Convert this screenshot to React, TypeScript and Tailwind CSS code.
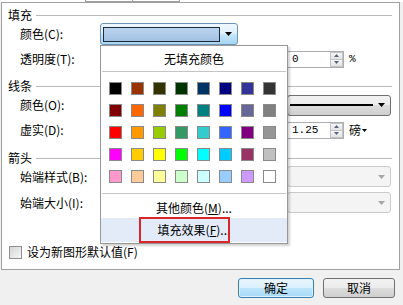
import React from "react";

const COLORS = [
  ["#000000", "#993300", "#333300", "#003300", "#003366", "#000080", "#333399", "#333333"],
  ["#800000", "#FF6600", "#808000", "#008000", "#008080", "#0000FF", "#666699", "#808080"],
  ["#FF0000", "#FF9900", "#99CC00", "#339966", "#33CCCC", "#3366FF", "#800080", "#969696"],
  ["#FF00FF", "#FFCC00", "#FFFF00", "#00FF00", "#00FFFF", "#00CCFF", "#993366", "#C0C0C0"],
  ["#FF99CC", "#FFCC99", "#FFFF99", "#CCFFCC", "#CCFFFF", "#99CCFF", "#CC99FF", "#FFFFFF"],
];

function Arrow({ color = "#000" }: { color?: string }) {
  return (
    <svg width="7" height="4" viewBox="0 0 7 4" className="block shrink-0">
      <path d="M0 0H7L3.5 4Z" fill={color} />
    </svg>
  );
}

function Header({ text }: { text: string }) {
  return (
    <div className="flex items-center h-[16px] pl-[6px] pr-[7px]">
      <span className="text-[12px] leading-none text-black">{text}</span>
      <div className="flex-1 ml-[4px] h-px bg-[#b9b9b9]" />
    </div>
  );
}

function Label({ text }: { text: string }) {
  return <span className="w-[80px] shrink-0 text-[12px] leading-none text-black">{text}</span>;
}

function Spin() {
  return (
    <div className="flex flex-col w-[13px] h-full border border-[#c3c3c3] shrink-0">
      <div className="flex-1 flex items-center justify-center bg-[linear-gradient(#f7f7f7,#e2e2e2)] border-b border-[#c3c3c3]">
        <svg width="5" height="3" viewBox="0 0 5 3" className="block">
          <path d="M0 3H5L2.5 0Z" fill="#55657f" />
        </svg>
      </div>
      <div className="flex-1 flex items-center justify-center bg-[linear-gradient(#f7f7f7,#e2e2e2)]">
        <svg width="5" height="3" viewBox="0 0 5 3" className="block">
          <path d="M0 0H5L2.5 3Z" fill="#55657f" />
        </svg>
      </div>
    </div>
  );
}

function NumInput({ value }: { value: string }) {
  return (
    <div className="flex items-stretch w-[57px] h-[17px] border border-[#abadb3] bg-white shrink-0">
      <span className="flex-1 pl-[4px] flex items-center text-[11px] leading-none font-['Liberation_Mono',monospace] text-black">
        {value}
      </span>
      <Spin />
    </div>
  );
}

function Dropdown({ disabled, children }: { disabled?: boolean; children?: React.ReactNode }) {
  return (
    <div
      className={
        disabled
          ? "flex items-center w-[104px] h-[21px] rounded-[3px] border border-[#c9cbcd] bg-[#f4f4f4] pr-[5px] shrink-0"
          : "flex items-center w-[104px] h-[21px] rounded-[3px] border border-[#707070] bg-[linear-gradient(#f2f2f2_0%,#ebebeb_50%,#dddddd_50%,#cfcfcf_100%)] pr-[5px] shrink-0"
      }
    >
      <div className="flex-1 flex items-center pl-[2px] pr-[5px]">{children}</div>
      <Arrow color={disabled ? "#a6a6a6" : "#000"} />
    </div>
  );
}

export default function App() {
  return (
    <div className="relative w-[403px] h-[305px] bg-[#f0f0f0] overflow-hidden font-['Noto_Sans_CJK_SC',sans-serif] text-black">
      {/* top strip */}
      <div className="h-[2px] bg-white flex">
        <div className="ml-[85px] w-[48px] h-[2px] border-x border-b border-[#a0a0a0]" />
        <div className="w-[47px] h-[2px] border-r border-b border-[#a0a0a0]" />
      </div>

      {/* panel */}
      <div className="ml-[1px] w-[399px] h-[268px] border border-[#a0a0a0] bg-white flex flex-col">
        <div className="mt-[4px]">
          <Header text="填充" />
        </div>
        <div className="flex items-center h-[22px] pl-[18px]">
          <Label text="颜色(C):" />
          <div className="flex items-center w-[138px] h-[22px] rounded-[3px] border border-[#6f94b6] bg-[linear-gradient(#eef7fd_0%,#e0f1fc_45%,#c3e5f8_55%,#a6d5f0_100%)] pl-[2px]">
            <div className="w-[117px] h-[15px] border border-[#1d2a38] bg-[linear-gradient(#b9d4ee,#a2c1e2)]" />
            <div className="flex-1 flex justify-center">
              <Arrow />
            </div>
          </div>
        </div>
        <div className="mt-[4px] flex items-center h-[20px] pl-[18px]">
          <Label text="透明度(T):" />
          <div className="w-[187px] shrink-0" />
          <NumInput value="0" />
          <span className="ml-[5px] text-[11px] leading-none font-['Liberation_Mono',monospace]">%</span>
        </div>
        <div className="mt-[9px]">
          <Header text="线条" />
        </div>
        <div className="flex items-center h-[22px] pl-[18px]">
          <Label text="颜色(O):" />
          <div className="w-[187px] shrink-0" />
          <Dropdown>
            <div className="w-full h-[2px] bg-black" />
          </Dropdown>
        </div>
        <div className="mt-[4px] flex items-center h-[20px] pl-[18px]">
          <Label text="虚实(D):" />
          <div className="w-[187px] shrink-0" />
          <NumInput value="1.25" />
          <span className="ml-[5px] text-[12px] leading-none">磅</span>
          <span className="ml-[1px]">
            <svg width="5" height="3" viewBox="0 0 5 3" className="block">
              <path d="M0 0H5L2.5 3Z" fill="#000" />
            </svg>
          </span>
        </div>
        <div className="mt-[10px]">
          <Header text="箭头" />
        </div>
        <div className="flex items-center h-[21px] pl-[18px]">
          <Label text="始端样式(B):" />
          <div className="w-[187px] shrink-0" />
          <Dropdown disabled />
        </div>
        <div className="mt-[5px] flex items-center h-[21px] pl-[18px]">
          <Label text="始端大小(I):" />
          <div className="w-[187px] shrink-0" />
          <Dropdown disabled />
        </div>
        <div className="mt-[31px] flex items-center h-[16px] pl-[7px]">
          <div className="w-[13px] h-[13px] border border-[#8f8f8f] bg-[linear-gradient(135deg,#d6d6d6,#f6f6f6)] shrink-0" />
          <span className="ml-[5px] text-[12px] leading-none">设为新图形默认值(F)</span>
        </div>
      </div>

      {/* buttons */}
      <div className="flex justify-end pt-[8px] pr-[8px] gap-[9px]">
        <button className="w-[76px] h-[20px] rounded-[3px] border border-[#3c7fb1] bg-[linear-gradient(#eaf6fd_0%,#d9f0fc_50%,#bee6fd_50%,#a7d9f5_100%)] text-[12px] leading-none flex items-center justify-center shadow-[inset_0_0_0_1px_#dff2fc]">
          确定
        </button>
        <button className="w-[72px] h-[20px] rounded-[3px] border border-[#707070] bg-[linear-gradient(#f2f2f2_0%,#ebebeb_50%,#dddddd_50%,#cfcfcf_100%)] text-[12px] leading-none flex items-center justify-center">
          取消
        </button>
      </div>

      {/* popup */}
      <div className="absolute left-[100px] top-[45px] w-[188px] border border-[#979797] bg-white shadow-[2px_2px_2px_rgba(0,0,0,0.18)]">
        <div className="h-[25px] flex items-center justify-center text-[12px] leading-none">无填充颜色</div>
        <div className="mx-[1px] h-px bg-[#c5c5c5]" />
        <div className="pt-[10px] pb-[10px] pl-[8px] flex flex-col gap-[9px]">
          {COLORS.map((row, i) => (
            <div key={i} className="flex gap-[9px]">
              {row.map((c, j) => (
                <div key={j} className="w-[13px] h-[13px] border border-[#8a8a8a]" style={{ backgroundColor: c }} />
              ))}
            </div>
          ))}
        </div>
        <div className="mx-[1px] h-px bg-[#c5c5c5]" />
        <div className="mt-[4px] h-[20px] flex items-center justify-center text-[12px] leading-none">
          其他颜色(<span className="underline">M</span>)...
        </div>
        <div className="h-[24px] flex items-center justify-center bg-[#e3ebf9] text-[12px] leading-none">
          填充效果(<span className="underline">F</span>)...
        </div>
        <div className="h-[1px]" />
        <div className="absolute left-[38px] top-[171px] w-[91px] h-[26px] border-2 border-[#d9262b]" />
      </div>
    </div>
  );
}
